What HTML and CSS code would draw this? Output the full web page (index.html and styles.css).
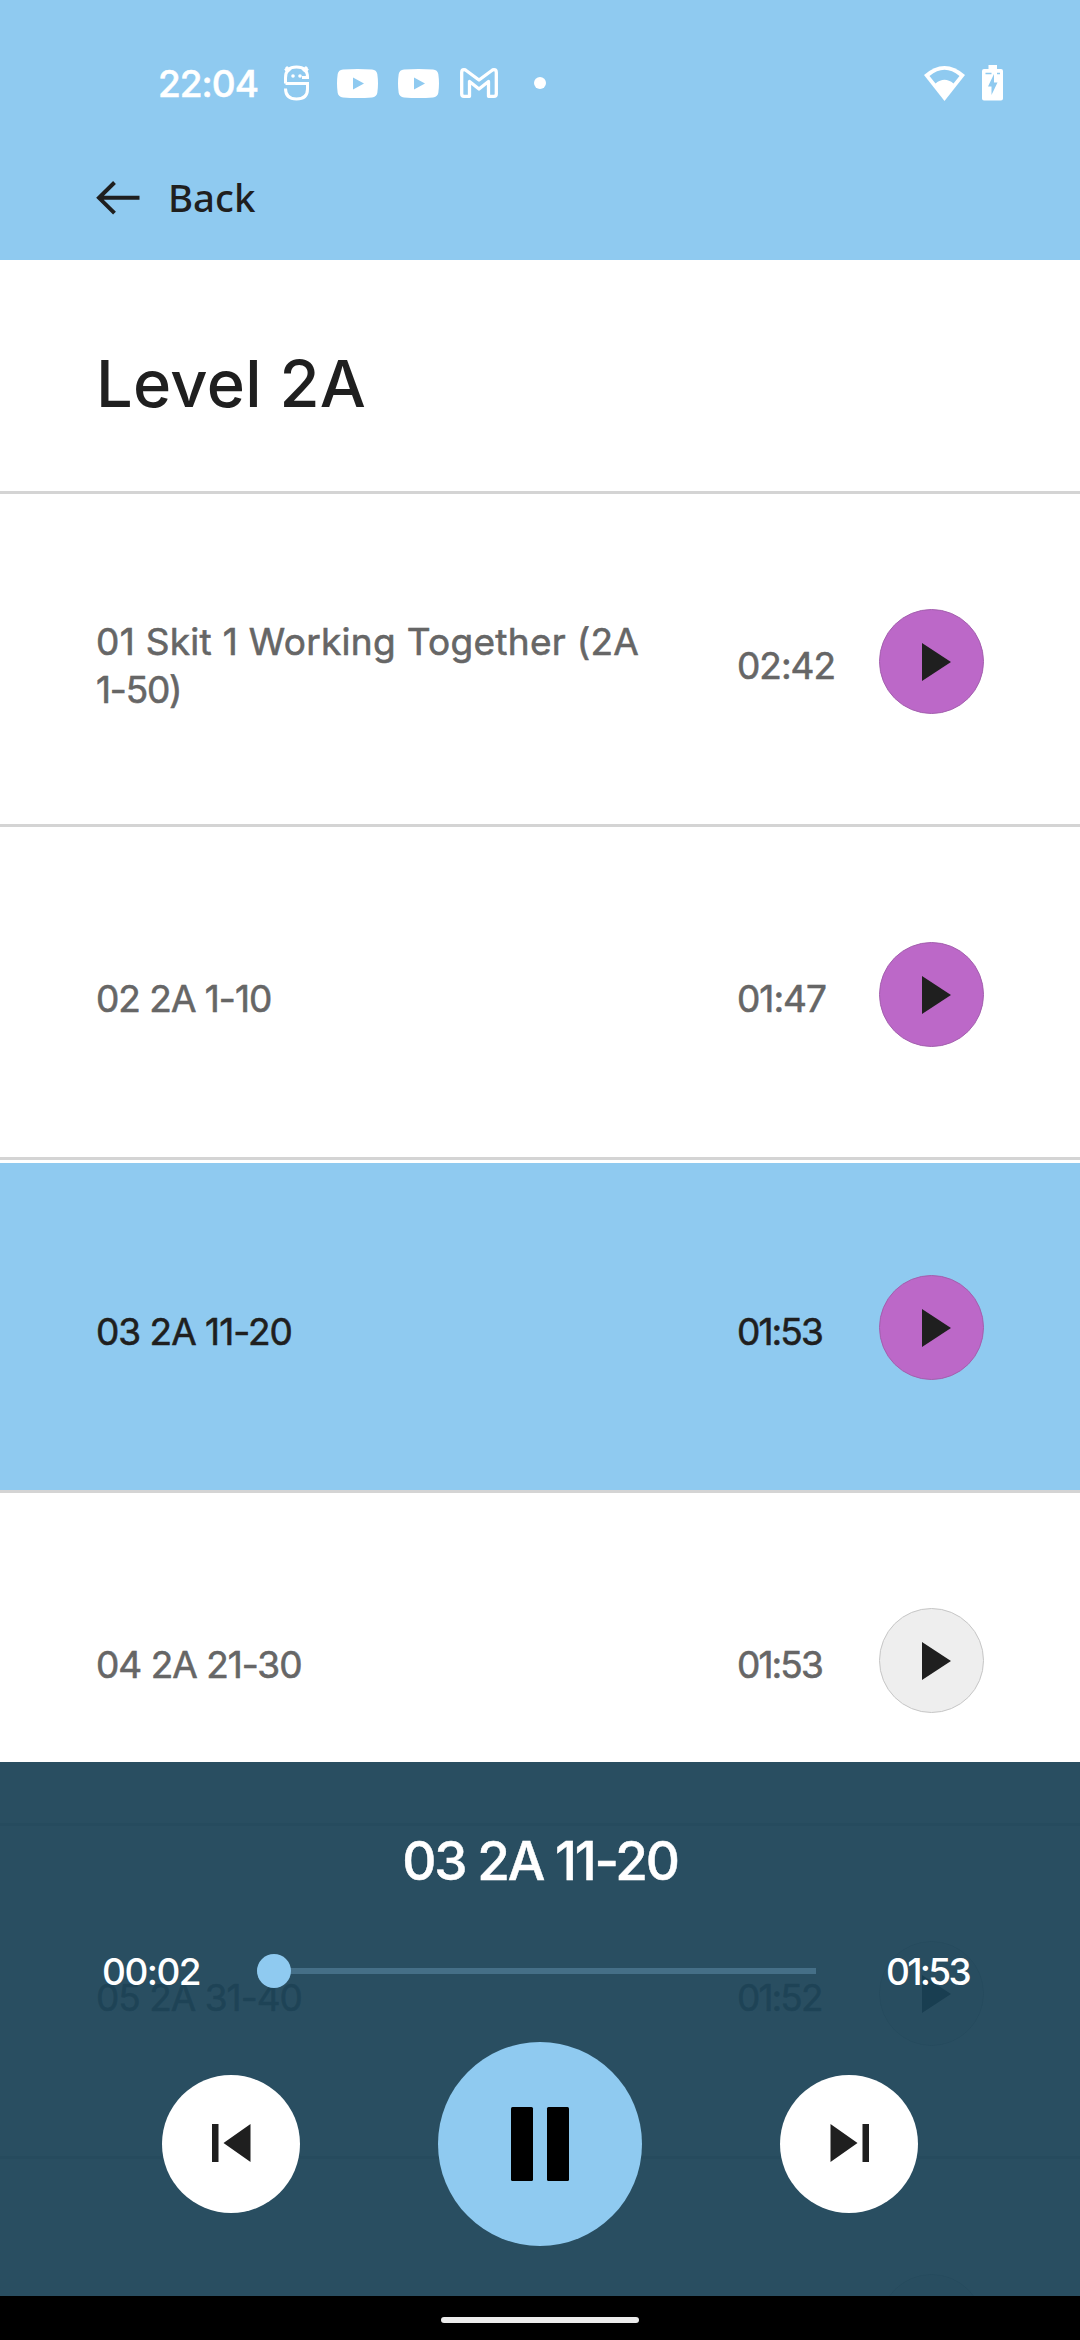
FILE: index.html
```html
<!DOCTYPE html>
<html lang="en">
<head>
<meta charset="utf-8">
<title>Level 2A</title>
<link rel="stylesheet" href="styles.css">
</head>
<body>
<svg class="defs" width="0" height="0">
  <symbol id="play" viewBox="0 0 29 38"><path d="M0 0L29 19L0 38z"/></symbol>
  <symbol id="youtube" viewBox="0 0 41 29"><path fill-rule="evenodd" d="M6 .6Q20.500-.6 35 .6Q39.500 1 40.300 5Q41.700 14.500 40.300 24Q39.500 28 35 28.400Q20.500 29.600 6 28.400Q1.500 28 .7 24Q-.7 14.500 .7 5Q1.500 1 6 .6zM16 8.500V20.500L27 14.500z"/></symbol>
</svg>
<div class="screen">
  <header class="top">
    <div class="status">
      <span class="clock">22:04</span>
      <svg class="ic-s" viewBox="0 0 25 36" fill="none" stroke="#fff" stroke-width="3"><path d="M1.500 18.500V13Q1.500 2 12.500 2T23.500 12.500H18M1.500 18.500H23.500V24Q23.500 34 12.500 34T1.500 23.500M2 2L6 6M23 2L19 6M1 5.500L5 3M24 5.500L20 3"/><g fill="#fff" stroke="none"><circle cx="9" cy="11" r="1.800"/><circle cx="16" cy="11" r="1.800"/></g></svg>
      <svg class="ic-yt" fill="#fff"><use href="#youtube"/></svg>
      <svg class="ic-yt second" fill="#fff"><use href="#youtube"/></svg>
      <svg class="ic-m" viewBox="0 0 38 30" fill="none" stroke="#fff" stroke-width="3.300" stroke-linejoin="round"><path d="M1.700 4.500Q1.700 1.700 4 1.700Q5.300 1.700 6.500 2.700L19 12L31.500 2.700Q32.700 1.700 34 1.700Q36.300 1.700 36.300 4.500V26Q36.300 28.300 34 28.300H28.500V13.500L19 21L9.500 13.500V28.300H4Q1.700 28.300 1.700 26z"/></svg>
      <i class="dot"></i>
      <svg class="ic-wifi" viewBox="0 0 41 35"><path fill="#fff" d="M0 9Q20.500-9 41 9L20.500 35z"/><path fill="#8fcaf0" d="M5.500 10Q20.500-2.500 35.500 10L29.500 17.500Q20.500 10 11.500 17.500z"/></svg>
      <svg class="ic-bat" viewBox="0 0 21 36"><path fill="#fff" d="M6.500 0H15V4H19Q21 4 21 6V33.500Q21 35.500 19 35.500H2Q0 35.500 0 33.500V6Q0 4 2 4H6.500z"/><path fill="#8fcaf0" d="M12 9V17.500H15.500L9.500 30V21.500H6z"/><path stroke="#8fcaf0" stroke-width="1.500" d="M3.500 8.500H9.500M15 8.500H18"/></svg>
    </div>
    <div class="nav">
      <svg class="ic-back" viewBox="0 0 44 34" fill="none" stroke="#1f1f1f" stroke-width="4"><path d="M43.500 16.800H3M18.500 1.500L3 16.800L18.500 32.200"/></svg>
      <span>Back</span>
    </div>
  </header>
  <main class="list">
    <h1 class="heading"><span>Level 2A</span></h1>
    <div class="row"><div class="name long">01 Skit 1 Working Together (2A<br><span class="tail">1-50)</span></div><div class="time">02:42</div><div class="play"><svg><use href="#play"/></svg></div></div>
    <div class="row"><div class="name">02 2A 1-10</div><div class="time">01:47</div><div class="play"><svg><use href="#play"/></svg></div></div>
    <div class="row active"><div class="name">03 2A 11-20</div><div class="time narrow">01:53</div><div class="play"><svg><use href="#play"/></svg></div></div>
    <div class="row"><div class="name">04 2A 21-30</div><div class="time narrow">01:53</div><div class="play gray"><svg><use href="#play"/></svg></div></div>
    <div class="row"><div class="name">05 2A 31-40</div><div class="time narrow">01:52</div><div class="play gray"><svg><use href="#play"/></svg></div></div>
    <div class="row"><div class="name"></div><div class="time"></div><div class="play gray"></div></div>
  </main>
  <section class="player">
    <div class="now"><span>03 2A 11-20</span></div>
    <div class="seek"><span class="elapsed">00:02</span><div class="track"><i class="knob"></i></div><span class="total">01:53</span></div>
    <div class="controls">
      <div class="btn"><svg width="39" height="38" viewBox="0 0 39 38"><path d="M0 0H6.500V38H0zM38.500 0V38L11.500 19z"/></svg></div>
      <div class="btn big"><svg width="58" height="74" viewBox="0 0 58 74"><rect width="22" height="74" rx="1.500"/><rect x="36" width="22" height="74" rx="1.500"/></svg></div>
      <div class="btn"><svg width="39" height="38" viewBox="0 0 39 38"><path d="M0.500 0L27.500 19L0.500 38zM32.500 0H39V38H32.500z"/></svg></div>
    </div>
  </section>
  <footer class="gesture"><i></i></footer>
</div>
</body>
</html>
```
FILE: styles.css
```css
* { box-sizing: border-box; }
body { margin: 0; background: #fff; }
.defs { display: block; height: 0; }
.screen {
  width: 1080px; height: 2340px; overflow: hidden;
  display: grid; grid-template-columns: 1080px; grid-template-rows: 260px 1502px 534px 44px;
  font-family: Inter, "Noto Sans", sans-serif; color: #1f1f1f;
}
svg { display: block; flex: none; }

.top { background: #8fcaf0; }
.status { height: 166px; padding-left: 158px; display: flex; align-items: center; }
.clock { width: 126px; font-size: 37px; font-weight: 500; letter-spacing: -1px; color: #fff; -webkit-text-stroke: .5px; }
.ic-s { width: 25px; height: 36px; }
.ic-yt { width: 41px; height: 29px; margin-left: 28px; }
.ic-yt.second { margin-left: 20px; }
.ic-m { width: 38px; height: 30px; margin-left: 21px; }
.dot { width: 12px; height: 12px; margin-left: 36px; border-radius: 50%; background: #fff; }
.ic-wifi { width: 41px; height: 35px; margin-left: 378px; }
.ic-bat { width: 21px; height: 36px; margin-left: 17px; }
.nav {
  display: flex; align-items: center; height: 63px; padding-left: 96px; gap: 28px;
  font: 500 38.400px/63px "Noto Sans", sans-serif;
}
.ic-back { width: 44px; height: 34px; }

/* the list continues underneath the translucent player */
.list { height: 2036px; overflow: hidden; }
.heading {
  margin: 0; height: 234px; padding: 16px 0 0 96px; border-bottom: 3px solid #d4d4d4;
  display: flex; align-items: center; font-size: 65px; font-weight: 500; letter-spacing: .3px;
}
.row {
  height: 333px; padding: 0 96px; border-top: 3px solid #fff; border-bottom: 3px solid #d4d4d4;
  display: grid; grid-template-columns: 641px 142px 105px; align-items: center;
  font-size: 37px; line-height: 48px; color: #666; -webkit-text-stroke: .6px;
}
.name, .time { padding-top: 10px; white-space: nowrap; letter-spacing: -1px; }
.long { letter-spacing: .3px; }
.tail { letter-spacing: -1.200px; }
.narrow { letter-spacing: -1.900px; }
.active { background: #8fcaf0; color: #1f1f1f; }
.play {
  width: 105px; height: 105px; margin-top: 2px; border-radius: 50%;
  background: #bc68c8; border: 1px solid #a35fae;
  display: flex; align-items: center; padding-left: 42px;
}
.play svg { width: 29px; height: 38px; fill: #1f1f1f; }
.gray { background: #eee; border-color: #c6c6c6; }

.player { position: relative; background: rgba(25, 65, 85, .93); color: #fff; font-weight: 500; }
.now { height: 168px; padding-top: 64px; text-align: center; font-size: 53px; line-height: 70px; letter-spacing: -2.200px; -webkit-text-stroke: .5px; }
.seek { height: 82px; padding-left: 102px; display: flex; align-items: center; font-size: 37px; letter-spacing: -1.500px; }
.elapsed { width: 155px; }
.track { position: relative; width: 559px; height: 6px; background: #456f87; }
.knob { position: absolute; left: 0; top: -14px; width: 34px; height: 34px; border-radius: 50%; background: #8fcaf0; }
.total { margin-left: 70px; letter-spacing: -2.700px; }
.controls { height: 264px; padding: 0 162px; display: flex; align-items: center; justify-content: space-between; }
.btn {
  width: 138px; height: 138px; border-radius: 50%; background: #fff;
  display: flex; align-items: center; justify-content: center; fill: #1f1f1f;
}
.btn svg { margin-top: -2px; }
.big { width: 204px; height: 204px; background: #8fcaf0; fill: #000; }
.big svg { margin-top: 0; }
.gesture { position: relative; background: #000; display: flex; justify-content: center; padding-top: 21px; }
.gesture i { width: 198px; height: 6px; border-radius: 3px; background: #ebebeb; }
```
